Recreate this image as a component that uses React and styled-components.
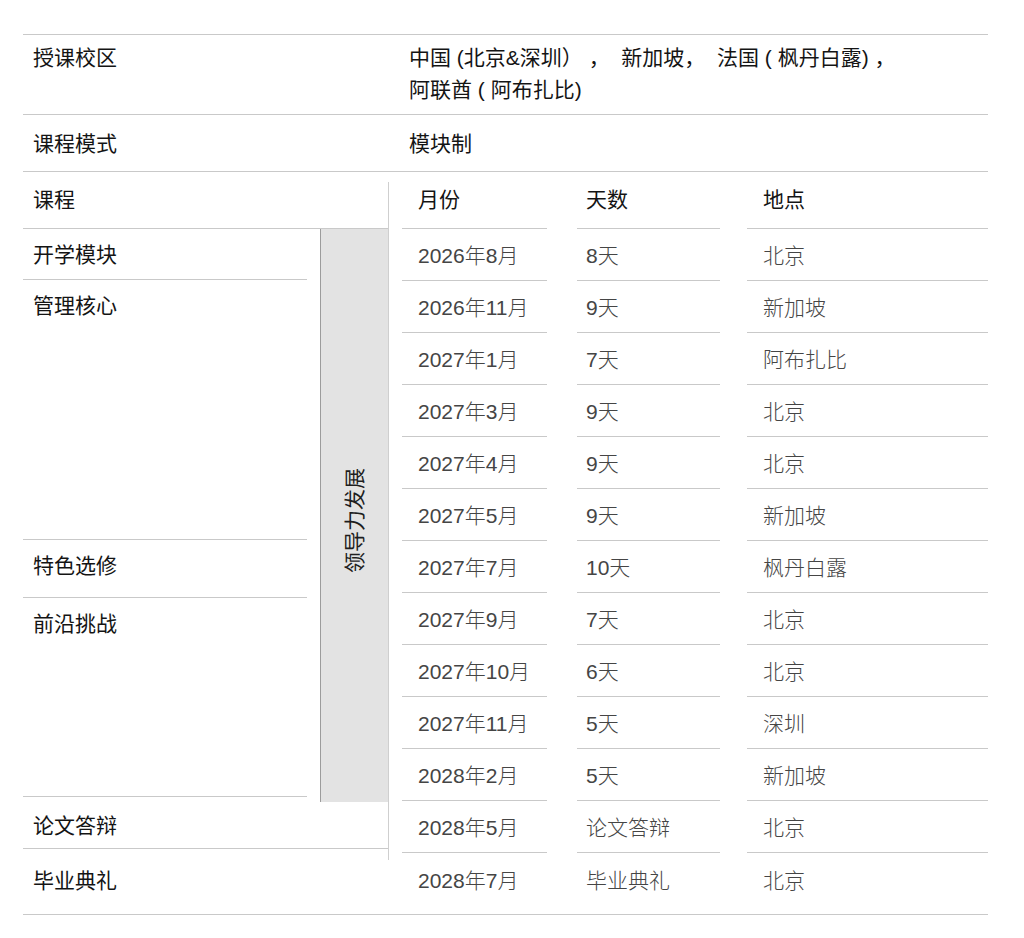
import React from 'react';
import styled, { createGlobalStyle } from 'styled-components';

const GlobalStyle = createGlobalStyle`
  body {
    margin: 0;
    background: #fff;
  }
`;

const LINE = '#c9c9c9';

const schedule = [
  ['2026年8月', '8天', '北京'],
  ['2026年11月', '9天', '新加坡'],
  ['2027年1月', '7天', '阿布扎比'],
  ['2027年3月', '9天', '北京'],
  ['2027年4月', '9天', '北京'],
  ['2027年5月', '9天', '新加坡'],
  ['2027年7月', '10天', '枫丹白露'],
  ['2027年9月', '7天', '北京'],
  ['2027年10月', '6天', '北京'],
  ['2027年11月', '5天', '深圳'],
  ['2028年2月', '5天', '新加坡'],
  ['2028年5月', '论文答辩', '北京'],
];

const courses = [
  { name: '开学模块', h: 51 },
  { name: '管理核心', h: 260 },
  { name: '特色选修', h: 58 },
  { name: '前沿挑战', h: 199 },
];

// widths / offsets of the three columns on the right
const cols = [
  { ml: 14, w: 145, pl: 16 },
  { ml: 30, w: 143, pl: 9 },
  { ml: 27, w: 241, pl: 16 },
];

function App() {
  return (
    <>
      <GlobalStyle />
      <Page>
        <InfoRow $top $pad="7px 0 8px">
          <Label>授课校区</Label>
          <Value>
            中国 (北京&amp;深圳）&nbsp;，&nbsp;&nbsp;新加坡，&nbsp;&nbsp;法国 ( 枫丹白露) ，<br />
            阿联酋 ( 阿布扎比)
          </Value>
        </InfoRow>
        <InfoRow $pad="13px 0 11px">
          <Label>课程模式</Label>
          <Value>模块制</Value>
        </InfoRow>

        <Schedule>
          <LeftSide>
            <HeadCell>课程</HeadCell>
            <Body>
              <Courses>
                {courses.map((c) => (
                  <Course key={c.name} $h={c.h}>{c.name}</Course>
                ))}
              </Courses>
              <Band>
                <BandText>领导力发展</BandText>
              </Band>
            </Body>
            <DefenseRow>论文答辩</DefenseRow>
          </LeftSide>

          <RightSide>
            <Row>
              {['月份', '天数', '地点'].map((t, i) => (
                <Cell key={t} {...colProps(i)} $head>{t}</Cell>
              ))}
            </Row>
            {schedule.map((r) => (
              <Row key={r[0]}>
                {r.map((t, i) => (
                  <Cell key={i} {...colProps(i)}>{t}</Cell>
                ))}
              </Row>
            ))}
          </RightSide>
        </Schedule>

        <FinalRow>
          <Label>毕业典礼</Label>
          <Row>
            {['2028年7月', '毕业典礼', '北京'].map((t, i) => (
              <Cell key={i} {...colProps(i)} $plain>{t}</Cell>
            ))}
          </Row>
        </FinalRow>
      </Page>
    </>
  );
}

function colProps(i) {
  const c = cols[i];
  return { $ml: c.ml, $w: c.w, $pl: c.pl };
}

const Page = styled.div`
  margin: 34px 0 0 23px;
  width: 965px;
  font-family: "Liberation Sans", "Noto Sans CJK SC", sans-serif;
  font-size: 21px;
  line-height: 32px;
  color: #141414;
`;

const InfoRow = styled.div`
  display: grid;
  grid-template-columns: 386px 1fr;
  padding: ${(p) => p.$pad};
  border-top: ${(p) => (p.$top ? `1px solid ${LINE}` : 'none')};
  border-bottom: 1px solid ${LINE};
`;

const Label = styled.div`
  padding-left: 10px;
  color: #141414;
`;

const Value = styled.div`
  color: #141414;
  white-space: nowrap;
`;

const Schedule = styled.div`
  position: relative;
  display: grid;
  grid-template-columns: 365px 600px;

  &::after {
    content: "";
    position: absolute;
    left: 365px;
    top: 10px;
    bottom: -7px;
    width: 1px;
    background: #cfcfcf;
  }
`;

const LeftSide = styled.div`
  display: flex;
  flex-direction: column;
`;

const HeadCell = styled.div`
  padding: 12px 0 12px 10px;
  border-bottom: 1px solid ${LINE};
`;

const Body = styled.div`
  display: flex;
  height: 573px;
`;

const Courses = styled.div`
  width: 284px;
  display: flex;
  flex-direction: column;
`;

const Course = styled.div`
  box-sizing: border-box;
  height: ${(p) => p.$h}px;
  padding: 10px 0 0 10px;
  border-bottom: 1px solid ${LINE};
`;

const Band = styled.div`
  margin-left: 13px;
  flex: 1;
  display: flex;
  align-items: center;
  justify-content: center;
  padding-top: 10px;
  background: #e3e3e3;
  border-left: 1px solid #9c9c9c;
`;

const BandText = styled.span`
  writing-mode: vertical-rl;
  text-orientation: sideways;
  transform: rotate(180deg);
  font-size: 21px;
  line-height: 24px;
  color: #1e1e1e;
`;

const DefenseRow = styled.div`
  padding: 8px 0 6px 10px;
  border-bottom: 1px solid ${LINE};
`;

const RightSide = styled.div`
  display: flex;
  flex-direction: column;
`;

const Row = styled.div`
  display: flex;
`;

const Cell = styled.div`
  box-sizing: border-box;
  margin-left: ${(p) => p.$ml}px;
  width: ${(p) => p.$w}px;
  padding: ${(p) => (p.$head ? '12px 0 12px' : '11px 0 8px')} ${(p) => p.$pl}px;
  border-bottom: ${(p) => (p.$plain ? 'none' : `1px solid ${LINE}`)};
  color: ${(p) => (p.$head ? '#141414' : '#454545')};
  font-weight: ${(p) => (p.$head ? 400 : 300)};
  white-space: nowrap;
`;

const FinalRow = styled.div`
  display: grid;
  grid-template-columns: 365px 600px;
  padding: 12px 0 17px;
  border-bottom: 1px solid ${LINE};

  ${Cell} {
    padding-top: 0;
    padding-bottom: 0;
  }
`;

export default App;
